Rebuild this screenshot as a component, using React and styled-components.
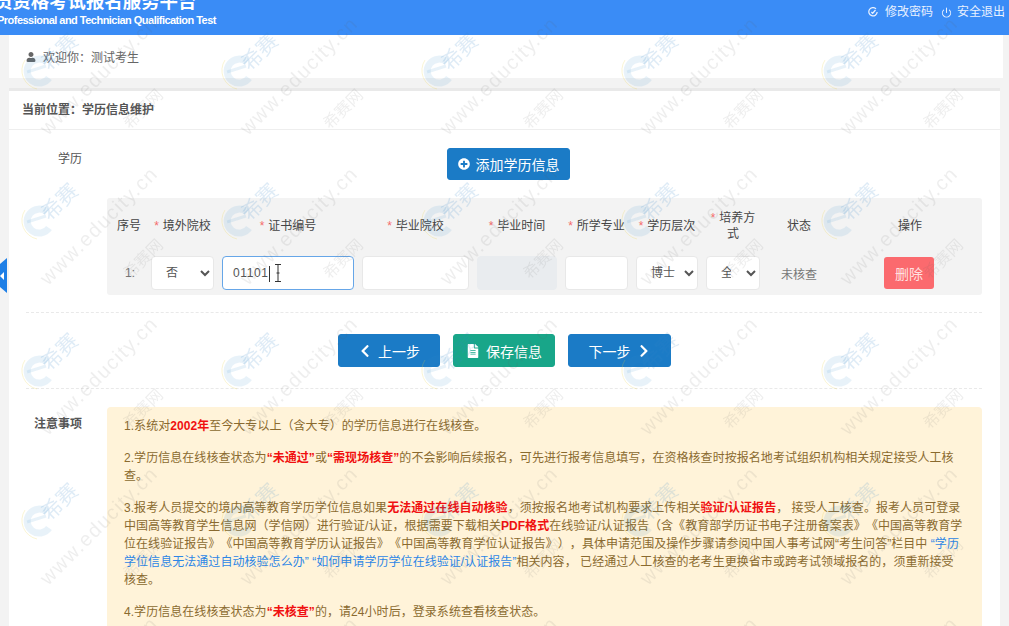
import React from 'react'
import styled, { createGlobalStyle } from 'styled-components'
import { FaUser, FaPlusCircle, FaChevronLeft, FaChevronRight, FaFileAlt } from 'react-icons/fa'
import { Power } from 'lucide-react'

const FONT = `"Liberation Sans", "Noto Sans CJK SC", sans-serif`

const Global = createGlobalStyle`
  html, body { margin: 0; padding: 0; background: #f3f3f3; }
  * { box-sizing: border-box; }
`

function Watermarks() {
  return (
    <Overlay width="1009" height="626">
      <defs>
        <pattern id="wm" x="12" y="2" width="200" height="150" patternUnits="userSpaceOnUse">
          <path d="M35 60a12 12 0 1 0 2 16" fill="none" stroke="#2f86c9" strokeOpacity=".11" strokeWidth="7" />
          <path d="M15 70l19-6" stroke="#2f86c9" strokeOpacity=".11" strokeWidth="3" />
          <path d="M13 58a19 19 0 0 0 12 29" fill="none" stroke="#e6d23c" strokeOpacity=".22" strokeWidth="1" />
          <text transform="translate(38 70) rotate(-45)" fontSize="21" fill="#2f86c9" fillOpacity=".16" fontFamily={FONT}>希赛</text>
          <text transform="translate(36 134) rotate(-45)" fontSize="20" letterSpacing="1.5" fill="#555" fillOpacity=".1" fontFamily={FONT}>www.educity.cn</text>
          <text transform="translate(118 128) rotate(-45)" fontSize="16" fill="#555" fillOpacity=".1" fontFamily={FONT}>希赛网</text>
        </pattern>
      </defs>
      <rect width="1009" height="626" fill="url(#wm)" />
    </Overlay>
  )
}

export default function App() {
  return (
    <Page>
      <Global />
      <Header>
        <Brand>
          <BrandTitle>员资格考试报名服务平台</BrandTitle>
          <BrandSub>Professional and Technician Qualification Test</BrandSub>
        </Brand>
        <HeaderLinks>
          <HeaderLink $gap={7}>
            <svg width="10" height="10" viewBox="0 0 12 12" fill="none" stroke="currentColor" strokeWidth="1.5">
              <path d="M9.6 2.2A5 5 0 1 0 11 6" />
              <path d="M4 6l1.6 1.5L9 3.6" />
            </svg>
            修改密码
          </HeaderLink>
          <HeaderLink $gap={5}>
            <Power size={11} strokeWidth={2.2} />
            安全退出
          </HeaderLink>
        </HeaderLinks>
      </Header>

      <Main>
        <Welcome>
          <FaUser size={10} color="#666" />
          欢迎你：测试考生
        </Welcome>

        <Card>
          <Crumb>当前位置：学历信息维护</Crumb>

          <Section>
            <SectionLabel>学历</SectionLabel>
            <SectionBody>
              <AddRow>
                <Btn $w={123} $h={32}>
                  <FaPlusCircle size={12} />
                  添加学历信息
                </Btn>
              </AddRow>
              <Panel>
                <Head $first>序号</Head>
                <Head><Star>*</Star>境外院校</Head>
                <Head><Star>*</Star>证书编号</Head>
                <Head><Star>*</Star>毕业院校</Head>
                <Head><Star>*</Star>毕业时间</Head>
                <Head><Star>*</Star>所学专业</Head>
                <Head><Star>*</Star>学历层次</Head>
                <Head><Star>*</Star>培养方式</Head>
                <Head>状态</Head>
                <Head>操作</Head>

                <RowNo>1:</RowNo>
                <Select defaultValue="否"><option>否</option><option>是</option></Select>
                <Field $focus>
                  01101<Caret />
                  <IBeam width="8" height="18" viewBox="0 0 8 18" fill="none" stroke="#333" strokeWidth="1">
                    <path d="M1 .5h6M1 17.5h6M4 .5v17M2.5 9h3" />
                  </IBeam>
                </Field>
                <Field />
                <Field $disabled />
                <Field />
                <Select defaultValue="博士"><option>博士</option></Select>
                <Select defaultValue="全日制" $tight><option>全日制</option></Select>
                <Status>未核查</Status>
                <DeleteCell><DeleteBtn>删除</DeleteBtn></DeleteCell>
              </Panel>
            </SectionBody>
          </Section>

          <Divider />
          <Actions>
            <Btn $w={102}><FaChevronLeft size={14} />上一步</Btn>
            <Btn $w={102} $green><FaFileAlt size={14} />保存信息</Btn>
            <Btn $w={103}>下一步<FaChevronRight size={14} /></Btn>
          </Actions>
          <Divider />

          <Section>
            <SectionLabel $strong>注意事项</SectionLabel>
            <SectionBody>
              <Notes>
                <p>1.系统对<b>2002年</b>至今大专以上（含大专）的学历信息进行在线核查。</p>
                <p>2.学历信息在线核查状态为<b>“未通过”</b>或<b>“需现场核查”</b>的不会影响后续报名，可先进行报考信息填写，在资格核查时按报名地考试组织机构相关规定接受人工核查。</p>
                <p>3.报考人员提交的境内高等教育学历学位信息如果<b>无法通过在线自动核验</b>，须按报名地考试机构要求上传相关<b>验证/认证报告</b>， 接受人工核查。报考人员可登录中国高等教育学生信息网（学信网）进行验证/认证，根据需要下载相关<b>PDF格式</b>在线验证/认证报告（含《教育部学历证书电子注册备案表》《中国高等教育学位在线验证报告》《中国高等教育学历认证报告》《中国高等教育学位认证报告》），具体申请范围及操作步骤请参阅中国人事考试网“考生问答”栏目中 <NoteLink>“学历学位信息无法通过自动核验怎么办” “如何申请学历学位在线验证/认证报告”</NoteLink>相关内容， 已经通过人工核查的老考生更换省市或跨考试领域报名的，须重新接受核查。</p>
                <p>4.学历信息在线核查状态为<b>“未核查”</b>的，请24小时后，登录系统查看核查状态。</p>
              </Notes>
            </SectionBody>
          </Section>
        </Card>
      </Main>

      <SideTab>
        <svg width="4" height="8" viewBox="0 0 4 8"><path d="M4 0v8L0 4z" fill="#fff" /></svg>
      </SideTab>
      <Watermarks />
    </Page>
  )
}

/* ==== Styled ==== */
const Page = styled.div`
  position: relative; width: 1009px; height: 626px; overflow: hidden;
  background: #f3f3f3; font-family: ${FONT}; font-size: 12px; color: #555;
  text-spacing-trim: space-all;
`
const Overlay = styled.svg`position: absolute; left: 0; top: 0; pointer-events: none;`
const Header = styled.header`
  height: 35px; background: #3a8cf6; color: #fff; overflow: hidden;
  display: flex; justify-content: space-between; align-items: flex-start;
`
const Brand = styled.div`margin: -9px 0 0 -6px; font-weight: 700;`
const BrandTitle = styled.div`font-size: 18.4px; line-height: 22px;`
const BrandSub = styled.div`
  font-size: 11px; letter-spacing: -.52px; line-height: 14px; margin-left: 3px; white-space: nowrap;
`
const HeaderLinks = styled.div`display: flex; gap: 8px; padding: 4px 4px 0 0;`
const HeaderLink = styled.a`
  display: flex; align-items: center; gap: ${p => p.$gap}px; line-height: 16px; color: #e8f1ff;
`
const Main = styled.main`padding-left: 9px;`
const Welcome = styled.div`
  width: 994px; height: 43px; background: #fff; padding-left: 17px;
  display: flex; align-items: center; gap: 7px; color: #666;
`
const Card = styled.section`
  width: 991px; margin-top: 10px; background: #fff; border-top: 3px solid #e9e9e9; height: 600px;
`
const Crumb = styled.div`
  height: 39px; line-height: 38px; padding-left: 13px; font-weight: 700; color: #555;
  border-bottom: 1px solid #eee;
`
const Section = styled.div`display: flex; align-items: flex-start; padding: 18px 18px 0 0;`
const SectionLabel = styled.div`
  width: 73px; margin-right: 25px; flex: none; text-align: right; line-height: 18px;
  color: #555; font-weight: ${p => (p.$strong ? 700 : 400)};
  padding-top: ${p => (p.$strong ? '8px' : '2px')};
`
const SectionBody = styled.div`flex: 1; min-width: 0;`
const AddRow = styled.div`padding-left: 340px; display: flex;`
const Btn = styled.button`
  width: ${p => p.$w}px; height: ${p => p.$h || 33}px; padding: 0;
  border: 1px solid ${p => (p.$green ? '#18a689' : '#1b7bc6')};
  border-radius: 3px; background: ${p => (p.$green ? '#18a689' : '#1b7bc6')}; color: #fff;
  font-family: ${FONT}; font-size: 14px;
  display: inline-flex; align-items: center; justify-content: center; gap: 6px;
`
const Panel = styled.div`
  margin-top: 18px; padding-bottom: 5px; background: #f3f3f3; border-radius: 3px;
  display: grid; column-gap: 8px;
  grid-template-columns: 36px 63px 132px 107px 80px 63px 62px 54px 62px 144px;
  grid-template-rows: 58px 34px;
`
const Head = styled.div`
  align-self: center; text-align: center; line-height: 16px; color: #444; padding-bottom: 3px;
  padding-left: ${p => (p.$first ? '8px' : '0')}; white-space: ${p => (p.$first ? 'nowrap' : 'normal')};
`
const Star = styled.span`color: #f56c6c; margin-right: 4px;`
const RowNo = styled.div`align-self: center; text-align: right; padding-right: 8px; color: #777;`
const Select = styled.select`
  width: 100%; height: 34px; padding: 0 ${p => (p.$tight ? '12px' : '2px')} 0 10px;
  border: 1px solid #e8e8e8; border-radius: 4px;
  background: #fff; color: #555; font-family: ${FONT}; font-size: 12px;
`
const Field = styled.div`
  position: relative; height: 34px; padding-left: 10px; border-radius: 4px; line-height: 32px;
  font-size: 12px; letter-spacing: .6px; color: #555;
  border: 1px solid ${p => (p.$focus ? '#66a6e8' : p.$disabled ? '#e9ecef' : '#e8e8e8')};
  background: ${p => (p.$disabled ? '#e9ecef' : '#fff')};
`
const Caret = styled.span`
  display: inline-block; width: 1px; height: 16px; margin-left: 1px; background: #333; vertical-align: middle;
`
const IBeam = styled.svg`position: absolute; left: 51px; top: 7px;`
const Status = styled.div`align-self: center; text-align: center; color: #777;`
const DeleteCell = styled.div`display: flex; align-items: center; justify-content: center; padding-right: 2px;`
const DeleteBtn = styled.button`
  width: 50px; height: 32px; padding: 0; border: none; border-radius: 3px;
  background: #fb6a6e; color: #ffe2e2; font-family: ${FONT}; font-size: 14px;
`
const Divider = styled.div`margin: 17px 18px 0 17px; border-top: 1px dashed #e9e9e9;`
const Actions = styled.div`display: flex; gap: 13px; padding: 21px 0 4px 329px;`
const Notes = styled.div`
  padding: 10px 18px 20px 17px; background: #fff3d9; border-radius: 4px; color: #8a6a2f;
  line-height: 18px; letter-spacing: .05px;
  p { margin: 0 0 14px; }
  b { color: #f01010; }
`
const NoteLink = styled.span`color: #2d86e6;`
const SideTab = styled.div`
  position: absolute; left: 0; top: 258px; width: 7px; height: 35px; background: #1e7fe6;
  clip-path: polygon(0 6px, 7px 0, 7px 100%, 0 calc(100% - 6px));
  display: flex; align-items: center;
`
